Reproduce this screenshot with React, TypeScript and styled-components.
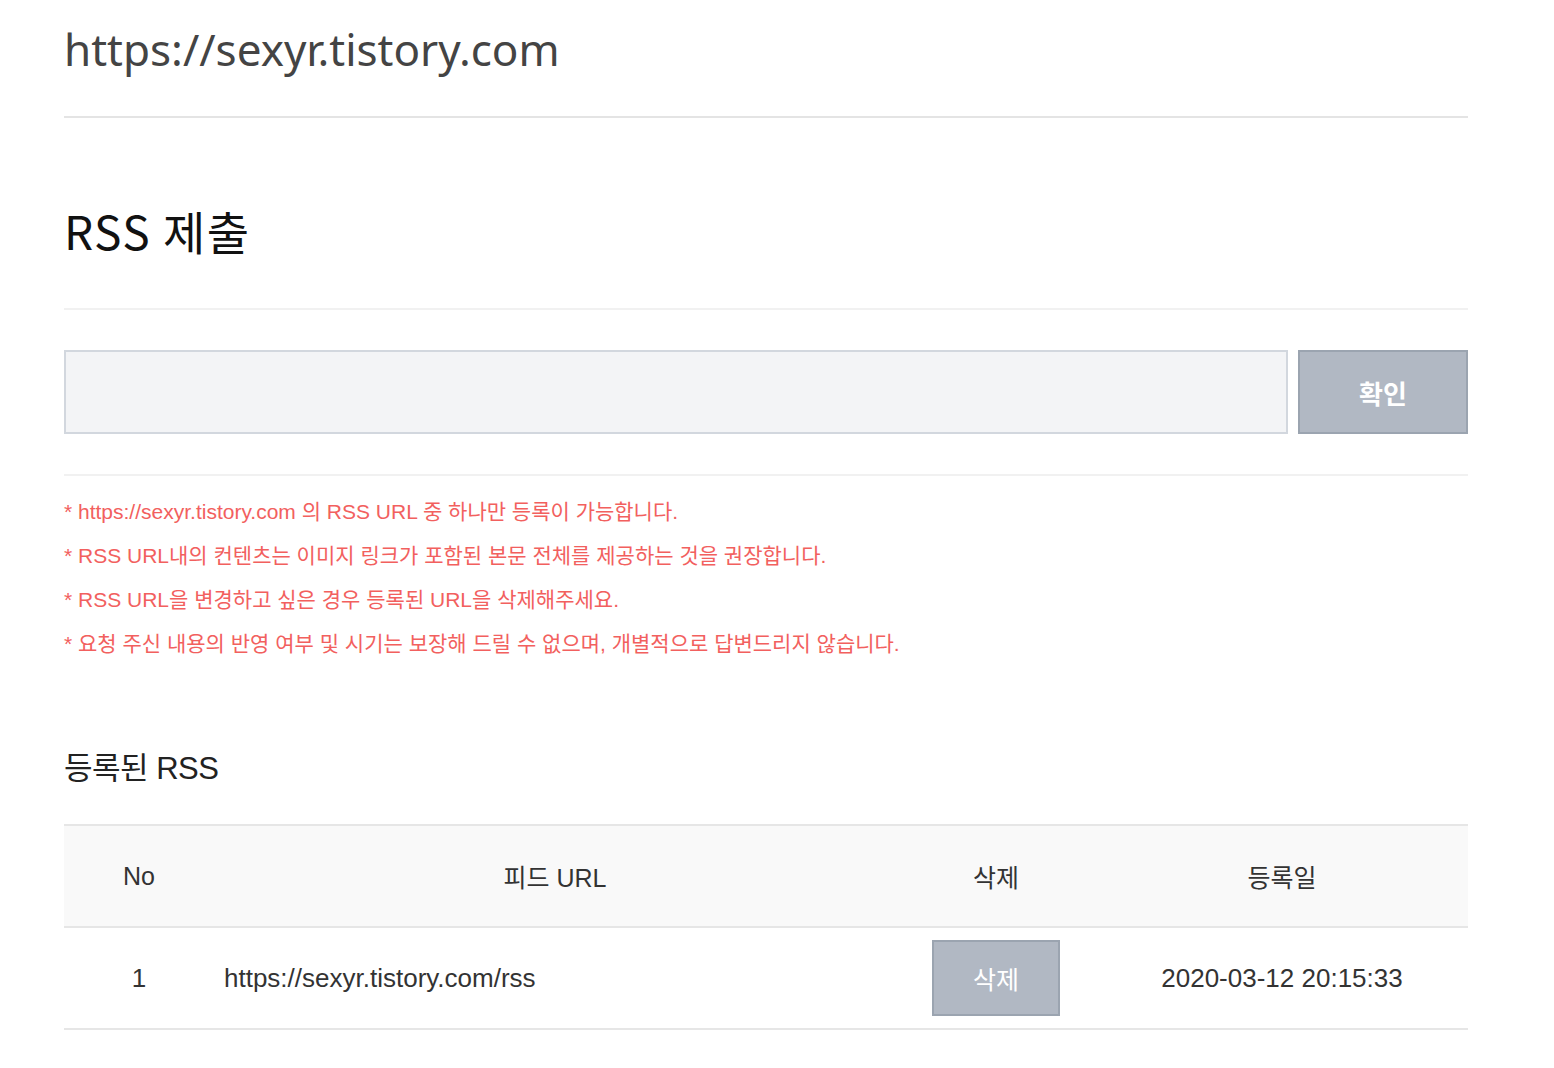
import React from "react";
import styled, { createGlobalStyle } from "styled-components";

const GlobalStyle = createGlobalStyle`
  html, body { margin: 0; padding: 0; background: #fff; }
  body { font-family: "Liberation Sans", "Noto Sans CJK KR", sans-serif; }
  * { box-sizing: border-box; }
`;

const Page = styled.div`
  width: 1404px;
  margin-left: 64px;
  display: flex;
  flex-direction: column;
`;

const SiteTitle = styled.h1`
  margin: 0;
  padding-top: 20px;
  font-family: "Noto Sans", "Noto Sans CJK KR", sans-serif;
  font-weight: 400;
  font-size: 44px;
  line-height: 58px;
  color: #444;
  border-bottom: 2px solid #e4e4e4;
  box-sizing: content-box;
  height: 96px;
`;

const SectionTitle = styled.h2`
  margin: 0;
  padding-top: 76px;
  height: 192px;
  font-family: "Noto Sans CJK KR", sans-serif;
  font-weight: 400;
  font-size: 46px;
  line-height: 72px;
  letter-spacing: 1.5px;
  color: #111;
  border-bottom: 2px solid #f1f1f1;
  box-sizing: border-box;
`;

const Form = styled.div`
  display: flex;
  gap: 10px;
  padding: 40px 0 40px;
  border-bottom: 2px solid #f1f1f1;
`;

const Input = styled.input`
  flex: 1;
  height: 84px;
  border: 2px solid #d2d7de;
  background: #f3f4f6;
  outline: none;
`;

const GrayButton = styled.button<{ $w: number; $h: number; $size: number; $bold?: boolean }>`
  width: ${(p) => p.$w}px;
  height: ${(p) => p.$h}px;
  border: 2px solid #9ba4b0;
  background: #b1b8c3;
  color: #fff;
  font-family: "Liberation Sans", "Noto Sans CJK KR", sans-serif;
  font-size: ${(p) => p.$size}px;
  font-weight: ${(p) => (p.$bold ? 700 : 400)};
  padding: 0;
  cursor: pointer;
`;

const Notes = styled.ul`
  list-style: none;
  margin: 0;
  padding: 14px 0 0;
  display: flex;
  flex-direction: column;
`;

const Note = styled.li`
  font-size: 21px;
  line-height: 44px;
  color: #f2605e;
`;

const SubTitle = styled.h3`
  margin: 0;
  padding-top: 81px;
  font-size: 31px;
  font-weight: 400;
  line-height: 44px;
  color: #222;
  letter-spacing: -0.5px;
`;

const Table = styled.table`
  margin-top: 33px;
  width: 100%;
  border-collapse: collapse;
  table-layout: fixed;
`;

const HeadRow = styled.tr`
  background: #f9f9f9;
  border-top: 2px solid #e6e6e6;
  border-bottom: 2px solid #e6e6e6;
`;

const BodyRow = styled.tr`
  border-bottom: 2px solid #e6e6e6;
`;

const Th = styled.th<{ $w: number }>`
  width: ${(p) => p.$w}px;
  height: 102px;
  font-size: 25px;
  font-weight: 400;
  color: #333;
  text-align: center;
  padding: 0;
`;

const Td = styled.td<{ $align?: string }>`
  height: 102px;
  font-size: 26px;
  color: #333;
  text-align: ${(p) => p.$align || "center"};
  padding: ${(p) => (p.$align === "left" ? "0 0 0 10px" : "0")};
`;

const notes = [
  "* https://sexyr.tistory.com 의 RSS URL 중 하나만 등록이 가능합니다.",
  "* RSS URL내의 컨텐츠는 이미지 링크가 포함된 본문 전체를 제공하는 것을 권장합니다.",
  "* RSS URL을 변경하고 싶은 경우 등록된 URL을 삭제해주세요.",
  "* 요청 주신 내용의 반영 여부 및 시기는 보장해 드릴 수 없으며, 개별적으로 답변드리지 않습니다.",
];

export default function App() {
  return (
    <>
      <GlobalStyle />
      <Page>
        <SiteTitle>https://sexyr.tistory.com</SiteTitle>
        <SectionTitle>RSS 제출</SectionTitle>
        <Form>
          <Input type="text" />
          <GrayButton $w={170} $h={84} $size={26} $bold>
            확인
          </GrayButton>
        </Form>
        <Notes>
          {notes.map((n) => (
            <Note key={n}>{n}</Note>
          ))}
        </Notes>
        <SubTitle>등록된 RSS</SubTitle>
        <Table>
          <thead>
            <HeadRow>
              <Th $w={150}>No</Th>
              <Th $w={682}>피드 URL</Th>
              <Th $w={200}>삭제</Th>
              <Th $w={372}>등록일</Th>
            </HeadRow>
          </thead>
          <tbody>
            <BodyRow>
              <Td>1</Td>
              <Td $align="left">https://sexyr.tistory.com/rss</Td>
              <Td>
                <GrayButton $w={128} $h={76} $size={25}>
                  삭제
                </GrayButton>
              </Td>
              <Td>2020-03-12 20:15:33</Td>
            </BodyRow>
          </tbody>
        </Table>
      </Page>
    </>
  );
}
